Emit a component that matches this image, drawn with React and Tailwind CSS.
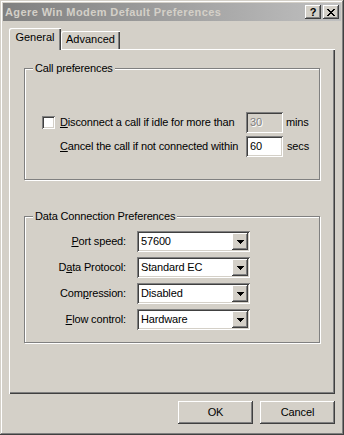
import React from 'react';

const raised = "shadow-[inset_-1px_-1px_#404040,inset_1px_1px_#fff,inset_-2px_-2px_#808080,inset_2px_2px_#d4d0c8]";
const sunken = "shadow-[inset_1px_1px_#808080,inset_-1px_-1px_#fff,inset_2px_2px_#404040,inset_-2px_-2px_#d4d0c8]";

const Select = ({ value }) => (
  <div className={`h-[21px] bg-white ${sunken} p-[2px] flex items-center`}>
    <span className="flex-1 pl-[2px] leading-none">{value}</span>
    <div className={`w-[16px] h-[17px] bg-[#d4d0c8] ${raised} flex items-center justify-center`}>
      <svg width="7" height="4" viewBox="0 0 7 4">
        <path d="M0 0h7v1H0zM1 1h5v1H1zM2 2h3v1H2zM3 3h1v1H3z" fill="#000" />
      </svg>
    </div>
  </div>
);

const GroupBox = ({ label, className, children }) => (
  <div className={`relative border border-[#808080] shadow-[inset_1px_1px_#fff,1px_1px_#fff] ${className}`}>
    <span className="absolute left-[8px] top-[-8px] px-[2px] bg-[#d4d0c8] leading-[14px]">{label}</span>
    {children}
  </div>
);

const App = () => {
  return (
    <div className={`w-[344px] h-[435px] bg-[#d4d0c8] p-[3px] flex flex-col text-[11px] text-black font-['Liberation_Sans',Arial,sans-serif] shadow-[inset_-1px_-1px_#404040,inset_1px_1px_#d4d0c8,inset_-2px_-2px_#808080,inset_2px_2px_#fff]`}>
      {/* title bar */}
      <div className="h-[18px] flex items-center pl-[2px] pr-[2px] bg-gradient-to-r from-[#808080] to-[#c0c0c0]">
        <span className="flex-1 font-bold text-[#d4d0c8] leading-none tracking-[0.4px]">Agere Win Modem Default Preferences</span>
        <div className={`w-[16px] h-[14px] bg-[#d4d0c8] ${raised} flex items-center justify-center font-bold text-[11px] leading-none`}>?</div>
        <div className={`ml-[2px] w-[16px] h-[14px] bg-[#d4d0c8] ${raised} flex items-center justify-center`}>
          <svg width="8" height="7" viewBox="0 0 8 7">
            <path d="M0 0h2v1H0zM6 0h2v1H6zM1 1h2v1H1zM5 1h2v1H5zM2 2h4v1H2zM3 3h2v1H3zM2 4h4v1H2zM1 5h2v1H1zM5 5h2v1H5zM0 6h2v1H0zM6 6h2v1H6z" fill="#000" />
          </svg>
        </div>
      </div>

      <div className="flex flex-col px-[6px] pt-[7px] flex-1 tracking-[-0.15px]">
        {/* tabs */}
        <div className="flex items-end h-[21px]">
          <div className="relative z-10 w-[52px] h-[22px] -mb-[1px] bg-[#d4d0c8] rounded-tl-[2px] shadow-[inset_1px_1px_#fff,inset_-1px_0_#404040,inset_-2px_0_#808080] flex justify-center pt-[4px] leading-none tracking-normal">
            General
          </div>
          <div className="w-[59px] h-[18px] bg-[#d4d0c8] rounded-tl-[2px] shadow-[inset_1px_1px_#fff,inset_-1px_0_#404040,inset_-2px_0_#808080] flex justify-center pt-[3px] leading-none tracking-normal">
            Advanced
          </div>
        </div>

        {/* panel */}
        <div className="h-[345px] shadow-[inset_1px_1px_#fff,inset_-1px_-1px_#404040,inset_-2px_-2px_#808080] pt-[19px] px-[15px]">
          <GroupBox label="Call preferences" className="h-[112px]">
            <div className="pt-[43px] pl-[17px] grid grid-cols-[18px_186px_37px_auto] gap-y-[3px] items-center">
              <div className={`w-[13px] h-[13px] bg-white ${sunken}`} />
              <span><u>D</u>isconnect a call if idle for more than</span>
              <div className={`h-[21px] bg-[#d4d0c8] ${sunken} flex items-center pl-[4px] text-[#808080] [text-shadow:1px_1px_#fff]`}>30</div>
              <span className="pl-[3px]">mins</span>

              <div />
              <span><u>C</u>ancel the call if not connected within</span>
              <div className={`h-[21px] bg-white ${sunken} flex items-center pl-[4px]`}>60</div>
              <span className="pl-[4px]">secs</span>
            </div>
          </GroupBox>

          <GroupBox label="Data Connection Preferences" className="mt-[36px] h-[127px]">
            <div className="pt-[14px] grid grid-cols-[101px_113px] gap-x-[11px] gap-y-[5px] items-center">
              <span className="text-right"><u>P</u>ort speed:</span>
              <Select value="57600" />
              <span className="text-right">D<u>a</u>ta Protocol:</span>
              <Select value="Standard EC" />
              <span className="text-right">Com<u>p</u>ression:</span>
              <Select value="Disabled" />
              <span className="text-right"><u>F</u>low control:</span>
              <Select value="Hardware" />
            </div>
          </GroupBox>
        </div>

        {/* buttons */}
        <div className="flex justify-end gap-[7px] mt-[7px]">
          <button className={`w-[75px] h-[23px] bg-[#d4d0c8] ${raised}`}>OK</button>
          <button className={`w-[75px] h-[23px] bg-[#d4d0c8] ${raised}`}>Cancel</button>
        </div>
      </div>
    </div>
  );
};

export default App;
